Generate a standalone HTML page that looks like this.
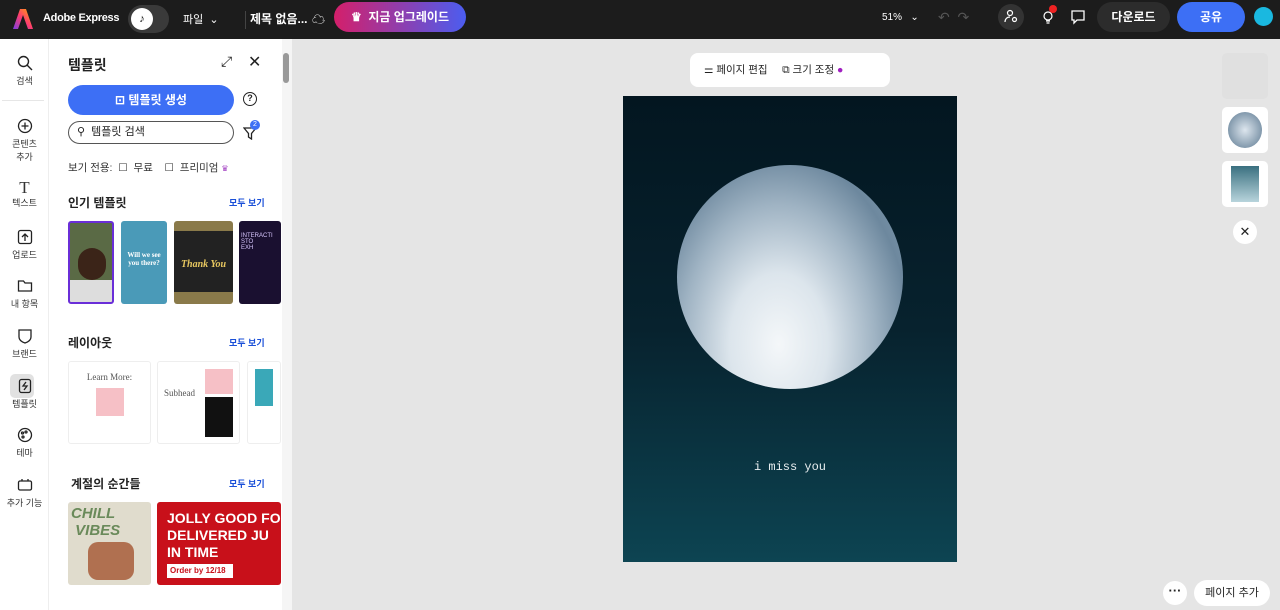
<!DOCTYPE html>
<html><head><meta charset="utf-8"><style>
*{box-sizing:border-box;margin:0;padding:0}
html,body{width:1280px;height:610px;overflow:hidden}
body{background:#e5e5e5;font-family:"Liberation Sans","Noto Sans CJK KR",sans-serif;position:relative;color:#222}
.top{position:absolute;left:0;top:0;width:1280px;height:39px;background:#1c1c1c;color:#fff}
.a{position:absolute}
.side{position:absolute;left:0;top:39px;width:49px;height:571px;background:#fff;border-right:1px solid #eee}
.si{position:absolute;width:49px;text-align:center;font-size:9px;color:#333}
.si svg{display:block;margin:0 auto 3px}
.panel{position:absolute;left:49px;top:39px;width:243px;height:571px;background:#fff;overflow:hidden}
.h{font-size:12px;font-weight:bold;position:absolute}
.more{font-size:9px;color:#1a4fd8;position:absolute;font-weight:bold}
.card{position:absolute;border-radius:3px;overflow:hidden}
</style></head><body>
<div class="top">
 <svg class="a" style="left:13px;top:8px" width="20" height="22" viewBox="0 0 20 22"><defs><linearGradient id="g" x1="0" y1="1" x2="1" y2="0"><stop offset="0" stop-color="#7b3fe4"/><stop offset=".5" stop-color="#ff3d6e"/><stop offset="1" stop-color="#ffb000"/></linearGradient></defs><path d="M7 1h6l7 20h-5l-5-14-5 14H0z" fill="url(#g)"/></svg>
 <div class="a" style="left:43px;top:12px;font-size:11px;font-weight:bold;letter-spacing:-0.3px">Adobe Express</div>
 <div class="a" style="left:128px;top:5px;width:41px;height:28px;border-radius:14px;background:#3a3a3a"></div>
 <div class="a" style="left:131px;top:8px;width:22px;height:22px;border-radius:11px;background:#fff;color:#111;font-size:11px;text-align:center;line-height:22px">♪</div>
 <div class="a" style="left:183px;top:11px;font-size:11px">파일 &nbsp;⌄</div>
 <div class="a" style="left:245px;top:11px;width:1px;height:18px;background:#444"></div>
 <div class="a" style="left:250px;top:10px;font-size:12px;font-weight:bold">제목 없음...</div>
 <div class="a" style="left:312px;top:9px;font-size:13px">☁</div>
 <div class="a" style="left:334px;top:2px;width:132px;height:30px;border-radius:15px;background:linear-gradient(90deg,#d41f6a,#4b5df0);font-size:12px;font-weight:bold;line-height:30px;text-align:center">♛ &nbsp;지금 업그레이드</div>
 <div class="a" style="left:882px;top:12px;font-size:10px">51% &nbsp; ⌄</div>
 <div class="a" style="left:938px;top:9px;font-size:14px;color:#555">↶ &nbsp;↷</div>
 <div class="a" style="left:998px;top:4px;width:26px;height:26px;border-radius:13px;background:#333"></div>
 <svg class="a" style="left:1004px;top:9px" width="14" height="14" viewBox="0 0 14 14" fill="none" stroke="#fff" stroke-width="1.2"><circle cx="6" cy="4" r="2.5"/><path d="M1 13c0-3 2-5 5-5"/><circle cx="10.5" cy="10.5" r="2"/></svg>
 <svg class="a" style="left:1040px;top:7px" width="16" height="18" viewBox="0 0 16 18" fill="none" stroke="#fff" stroke-width="1.2"><circle cx="8" cy="9" r="4"/><path d="M6 14h4M6.5 16h3"/></svg>
 <div class="a" style="left:1049px;top:5px;width:8px;height:8px;border-radius:4px;background:#e22"></div>
 <svg class="a" style="left:1070px;top:9px" width="16" height="16" viewBox="0 0 16 16" fill="none" stroke="#fff" stroke-width="1.3"><path d="M2 2h12v9H7l-3 3v-3H2z"/></svg>
 <div class="a" style="left:1097px;top:2px;width:73px;height:30px;border-radius:15px;background:#2c2c2c;font-size:12px;font-weight:bold;text-align:center;line-height:30px">다운로드</div>
 <div class="a" style="left:1177px;top:2px;width:68px;height:30px;border-radius:15px;background:#3d6ff5;font-size:12px;font-weight:bold;text-align:center;line-height:30px">공유</div>
 <div class="a" style="left:1254px;top:7px;width:19px;height:19px;border-radius:10px;background:#1ab8e0"></div>
</div>
<div class="side">
 <div class="si" style="top:16px"><svg width="16" height="16" viewBox="0 0 16 16" fill="none" stroke="#222" stroke-width="1.4"><circle cx="6.5" cy="6.5" r="5"/><path d="M10 10l5 5"/></svg>검색</div>
 <div style="position:absolute;left:2px;top:61px;width:42px;height:1px;background:#e6e6e6"></div>
 <div class="si" style="top:79px"><svg width="16" height="16" viewBox="0 0 16 16" fill="none" stroke="#222" stroke-width="1.3"><circle cx="8" cy="8" r="6.5"/><path d="M8 4.5v7M4.5 8h7"/></svg>콘텐츠<br>추가</div>
 <div class="si" style="top:140px"><div style="font-family:'Liberation Serif';font-size:17px;line-height:17px">T</div>텍스트</div>
 <div class="si" style="top:190px"><svg width="16" height="16" viewBox="0 0 16 16" fill="none" stroke="#222" stroke-width="1.3"><rect x="1.5" y="1.5" width="13" height="13" rx="2"/><path d="M8 12V5M5 8l3-3 3 3"/></svg>업로드</div>
 <div class="si" style="top:239px"><svg width="16" height="16" viewBox="0 0 16 16" fill="none" stroke="#222" stroke-width="1.3"><path d="M1.5 3h5l1.5 2h6.5v8h-13z"/></svg>내 항목</div>
 <div class="si" style="top:289px"><svg width="16" height="16" viewBox="0 0 16 16" fill="none" stroke="#222" stroke-width="1.3"><path d="M2 2h12v7c0 3-3 5-6 6-3-1-6-3-6-6z"/></svg>브랜드</div>
 <div style="position:absolute;left:10px;top:335px;width:24px;height:24px;border-radius:5px;background:#e1e1e1"></div>
 <div class="si" style="top:339px"><svg width="16" height="16" viewBox="0 0 16 16" fill="none" stroke="#222" stroke-width="1.3"><rect x="2.5" y="1.5" width="11" height="13" rx="2"/><path d="M9 4l-3 4h4l-3 4"/></svg>템플릿</div>
 <div class="si" style="top:388px"><svg width="16" height="16" viewBox="0 0 16 16" fill="none" stroke="#222" stroke-width="1.3"><circle cx="8" cy="8" r="6.5"/><circle cx="5.5" cy="6" r="1"/><circle cx="9" cy="5" r="1"/><circle cx="6" cy="10" r="1"/></svg>테마</div>
 <div class="si" style="top:438px"><svg width="16" height="16" viewBox="0 0 16 16" fill="none" stroke="#222" stroke-width="1.3"><rect x="1.5" y="4" width="13" height="9" rx="1.5"/><path d="M5 4V2M11 4V2"/></svg>추가 기능</div>
</div>
<div class="panel">
 <div class="h" style="left:19px;top:16px;font-size:14px">템플릿</div>
 <div class="a" style="left:172px;top:14px;font-size:14px">⤢</div>
 <div class="a" style="left:199px;top:13px;font-size:16px">✕</div>
 <div class="a" style="left:19px;top:46px;width:166px;height:30px;border-radius:15px;background:#3d6ff5;color:#fff;font-size:12px;font-weight:bold;text-align:center;line-height:30px">⊡ 템플릿 생성</div>
 <div class="a" style="left:194px;top:53px;width:14px;height:14px;border:1.5px solid #222;border-radius:7px;font-size:9px;text-align:center;line-height:11px;font-weight:bold">?</div>
 <div class="a" style="left:19px;top:82px;width:166px;height:23px;border-radius:12px;border:1.5px solid #555;font-size:11px;line-height:20px;padding-left:8px">⚲ &nbsp;템플릿 검색</div>
 <svg class="a" style="left:194px;top:87px" width="14" height="14" viewBox="0 0 14 14" fill="none" stroke="#222" stroke-width="1.3"><path d="M1 2h12L8.5 7.5V13L5.5 11V7.5z"/></svg>
 <div class="a" style="left:201px;top:81px;width:10px;height:10px;border-radius:5px;background:#3d6ff5;color:#fff;font-size:7px;text-align:center;line-height:10px">2</div>
 <div class="a" style="left:19px;top:121px;font-size:10.5px;color:#333">보기 전용: &nbsp;☐ &nbsp;무료 &nbsp; &nbsp;☐ &nbsp;프리미엄 <span style="color:#a03cc0;font-size:8px">♛</span></div>
 <div class="h" style="left:19px;top:155px">인기 템플릿</div><div class="more" style="left:180px;top:157px">모두 보기</div>
 <div class="card" style="left:19px;top:182px;width:46px;height:83px;background:#5a6a45;border:2px solid #6a2ed8"><div style="position:absolute;left:8px;top:25px;width:28px;height:32px;border-radius:14px;background:#3b2418"></div><div style="position:absolute;left:0;bottom:0;width:46px;height:22px;background:#ddd"></div></div>
 <div class="card" style="left:72px;top:182px;width:46px;height:83px;background:#4a9ab8;color:#fff;font-size:7px;font-family:'Liberation Serif';text-align:center;padding-top:30px;font-weight:bold">Will we see<br>you there?</div>
 <div class="card" style="left:125px;top:182px;width:59px;height:83px;background:#222;color:#e8c860;font-size:10px;font-family:'Liberation Serif';font-style:italic;font-weight:bold;text-align:center;padding-top:28px;border-top:10px solid #8a7a4a;border-bottom:12px solid #8a7a4a">Thank You</div>
 <div class="card" style="left:190px;top:182px;width:42px;height:83px;background:#1a1030;color:#d9c8ff;font-size:6px;padding:12px 2px">INTERACTI<br>STO<br>EXH</div>
 <div class="h" style="left:19px;top:295px">레이아웃</div><div class="more" style="left:180px;top:297px">모두 보기</div>
 <div class="card" style="left:19px;top:322px;width:83px;height:83px;border:1px solid #eee;background:#fff;font-size:9px;font-family:'Liberation Serif';color:#555;text-align:center;padding-top:10px">Learn More:<div style="margin:6px auto 0;width:28px;height:28px;background:#f6c0c6"></div></div>
 <div class="card" style="left:108px;top:322px;width:83px;height:83px;border:1px solid #eee;background:#fff;font-size:9px;font-family:'Liberation Serif';color:#555;padding:26px 0 0 6px">Subhead<div style="position:absolute;left:47px;top:7px;width:28px;height:25px;background:#f6c0c6"></div><div style="position:absolute;left:47px;top:35px;width:28px;height:40px;background:#111"></div></div>
 <div class="card" style="left:198px;top:322px;width:34px;height:83px;border:1px solid #eee;background:#fff"><div style="margin:7px;height:37px;background:#3aa8b8"></div></div>
 <div class="h" style="left:22px;top:436px">계절의 순간들</div><div class="more" style="left:180px;top:438px">모두 보기</div>
 <div class="card" style="left:19px;top:463px;width:83px;height:83px;background:#e0dccd;color:#6a8a5a;font-size:15px;font-weight:bold;font-style:italic;padding:3px">CHILL<br>&nbsp;VIBES<div style="position:absolute;left:20px;top:40px;width:46px;height:38px;border-radius:10px;background:#b07050"></div></div>
 <div class="card" style="left:108px;top:463px;width:124px;height:83px;background:#c8101a;color:#fff;font-size:14px;font-weight:bold;padding:8px 0 0 10px;line-height:17px;white-space:nowrap">JOLLY GOOD FO<br>DELIVERED JU<br>IN TIME<div style="background:#fff;color:#c8101a;font-size:8px;width:66px;padding:2px 3px;margin-top:3px;line-height:10px">Order by 12/18</div></div>
 <div class="a" style="left:233px;top:0;width:10px;height:571px;background:#f5f5f5"></div>
 <div class="a" style="left:234px;top:14px;width:6px;height:30px;border-radius:3px;background:#999"></div>
</div>
<div class="a" style="left:690px;top:53px;width:200px;height:34px;background:#fff;border-radius:8px;font-size:10.5px;line-height:34px;padding-left:14px">⚌ 페이지 편집 &nbsp; &nbsp; ⧉ 크기 조정 <span style="color:#a020c0">●</span></div>
<div class="a" style="left:623px;top:96px;width:334px;height:466px;background:linear-gradient(180deg,#031620 0%,#07222e 50%,#0d4452 100%)">
 <div style="position:absolute;left:54px;top:69px;width:226px;height:224px;border-radius:50%;background:radial-gradient(ellipse at 45% 80%,#f4f7f9 0%,#dce5ec 28%,#9fb3c3 55%,#6d889e 75%,#8aa2b5 100%)"></div>
 <div style="position:absolute;left:0;width:334px;top:364px;text-align:center;color:#e8eef0;font-family:'Liberation Mono',monospace;font-size:12px">i miss you</div>
</div>
<div class="a" style="left:1222px;top:53px;width:46px;height:46px;border-radius:5px;background:#e0e0e0"></div>
<div class="a" style="left:1222px;top:107px;width:46px;height:46px;border-radius:5px;background:#fff"><div style="margin:5px 6px;width:34px;height:36px;border-radius:50%;background:radial-gradient(#dde6ee,#5b7890)"></div></div>
<div class="a" style="left:1222px;top:161px;width:46px;height:46px;border-radius:5px;background:#fff"><div style="margin:5px 9px;width:28px;height:36px;background:linear-gradient(#3a7080,#b8d4dc)"></div></div>
<div class="a" style="left:1233px;top:220px;width:24px;height:24px;border-radius:12px;background:#fff;text-align:center;line-height:24px;font-size:13px">✕</div>
<div class="a" style="left:1163px;top:581px;width:24px;height:24px;border-radius:12px;background:#fff;text-align:center;line-height:20px;font-size:13px;font-weight:bold">···</div>
<div class="a" style="left:1194px;top:580px;width:76px;height:26px;border-radius:13px;background:#fff;text-align:center;line-height:26px;font-size:11px">페이지 추가</div>
</body></html>
